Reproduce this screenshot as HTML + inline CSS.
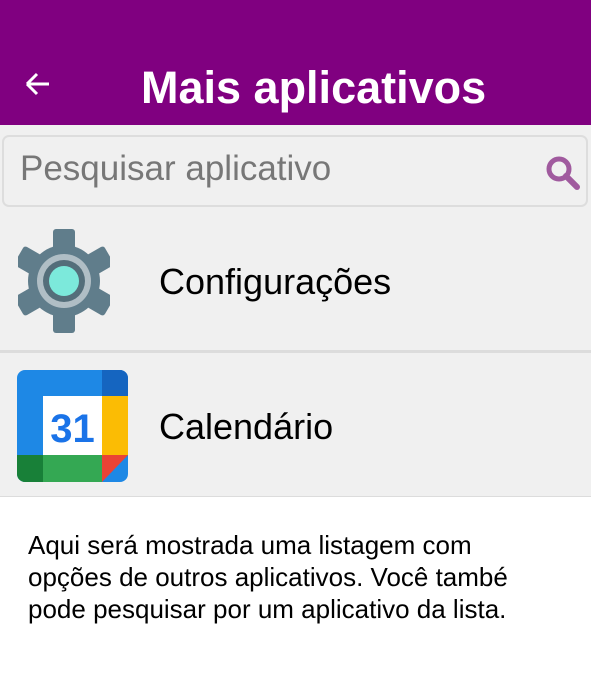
<!DOCTYPE html>
<html><head><meta charset="utf-8"><style>
*{margin:0;padding:0;box-sizing:border-box}
body{width:591px;height:673px;overflow:hidden;background:#fff;font-family:"Liberation Sans",sans-serif;position:relative}
.top{position:absolute;left:0;top:0;width:591px;height:125px;background:#800080}
.title{position:absolute;left:141px;top:62px;font-size:45px;color:#fff;font-weight:bold;white-space:nowrap}
.grey{position:absolute;left:0;top:125px;width:591px;height:372px;background:#f0f0f0}
.search{position:absolute;left:2px;top:135px;width:586px;height:72px;border:2px solid #ddd;border-radius:7px;background:#f0f0f0}
.ph{position:absolute;left:16px;top:12px;font-size:35px;color:#777;white-space:nowrap}
.div{position:absolute;left:0;width:591px;height:3px;background:#dcdcdc}
.lbl{position:absolute;left:159px;font-size:36px;color:#000;white-space:nowrap}
.para{position:absolute;left:28px;top:529px;font-size:26px;line-height:32px;color:#000;white-space:nowrap}
</style></head><body>
<div class="top"></div>
<svg style="position:absolute;left:24px;top:71px" width="28" height="26" viewBox="0 0 28 26"><path d="M3 13H25M3 13L13 3M3 13L13 23" stroke="#fff" stroke-width="3" fill="none"/></svg>
<div class="title">Mais aplicativos</div>
<div class="grey"></div>
<div class="search"><div class="ph">Pesquisar aplicativo</div></div>
<svg style="position:absolute;left:544px;top:153px" width="38" height="38" viewBox="0 0 38 38"><circle cx="15" cy="16" r="10" stroke="#a05a9e" stroke-width="5" fill="none"/><path d="M22 23L33 34" stroke="#a05a9e" stroke-width="6" stroke-linecap="round"/></svg>
<svg style="position:absolute;left:18px;top:227px" width="92" height="108" viewBox="0 0 92 108">
<g fill="#607d8b" transform="translate(46,54)">
<circle r="36"/>
<g id="t"><rect x="-11" y="-52" width="22" height="24" rx="3"/></g>
<use href="#t" transform="rotate(60)"/><use href="#t" transform="rotate(120)"/><use href="#t" transform="rotate(180)"/><use href="#t" transform="rotate(240)"/><use href="#t" transform="rotate(300)"/>
<circle r="27" fill="#b0bec5"/>
<circle r="21" fill="#546e7a"/>
<circle r="15" fill="#84ffec" opacity="0.85"/>
</g></svg>
<div class="lbl" style="top:261px">Configurações</div>
<div class="div" style="top:350px"></div>
<svg style="position:absolute;left:17px;top:370px" width="111" height="112" viewBox="0 0 111 112">
<rect x="0" y="0" width="111" height="112" rx="8" fill="#1e88e5"/>
<path d="M85 0H103a8 8 0 0 1 8 8V26H85Z" fill="#1565c0"/>
<rect x="85" y="26" width="26" height="59" fill="#fbbc04"/>
<path d="M0 85H26V112H8a8 8 0 0 1-8-8Z" fill="#188038"/>
<rect x="26" y="85" width="59" height="27" fill="#34a853"/>
<path d="M85 85H111L85 112Z" fill="#ea4335"/>
<rect x="26" y="26" width="59" height="59" fill="#fff"/>
<text x="55.5" y="72" font-family="Liberation Sans,sans-serif" font-size="40" font-weight="bold" fill="#1a73e8" text-anchor="middle">31</text>
</svg>
<div class="lbl" style="top:406px">Calendário</div>
<div class="div" style="top:496px;height:1px"></div>
<div class="para">Aqui será mostrada uma listagem com<br>opções de outros aplicativos. Você també<br>pode pesquisar por um aplicativo da lista.</div>
</body></html>
